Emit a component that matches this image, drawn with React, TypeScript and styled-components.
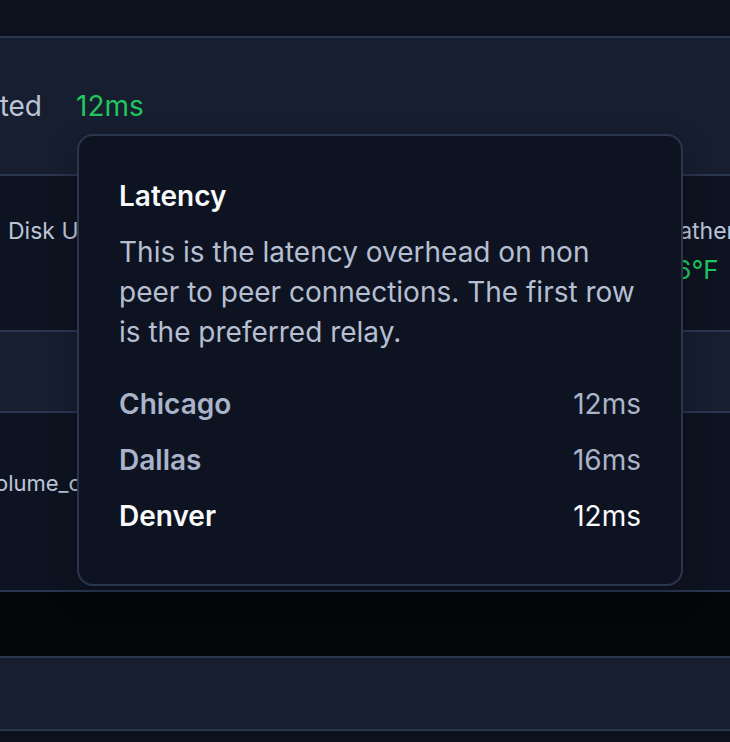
import styled, { createGlobalStyle } from "styled-components";
import { Sun } from "lucide-react";

const GlobalStyle = createGlobalStyle`
  body {
    margin: 0;
    background-color: #0c111d;
    font-family: Inter, "Noto Sans", sans-serif;
    overflow: hidden;
  }
`;

const Page = styled.div`
  position: relative;
  width: 730px;
  height: 742px;
  display: flex;
  flex-direction: column;
  background-color: #0c111d;
`;

const TopBand = styled.div`
  height: 36px;
  flex-shrink: 0;
`;

const Table = styled.div`
  border-top: 2px solid #2a3550;
  flex-shrink: 0;
`;

const Row = styled.div<{ $light?: boolean; $height: number; $padTop?: number }>`
  height: ${(p) => p.$height}px;
  padding-top: ${(p) => p.$padTop ?? 0}px;
  box-sizing: border-box;
  background-color: ${(p) => (p.$light ? "#161e30" : "#0e1321")};
  border-bottom: 2px solid #2a3550;
  overflow: hidden;
`;

const StatusRow = styled.div`
  display: flex;
  align-items: center;
  gap: 34px;
  height: 100%;
  font-size: 28px;
  line-height: 40px;
`;

// label whose left part runs off the page: keep the right end visible
const ClipLabel = styled.div<{ $width: number }>`
  width: ${(p) => p.$width}px;
  display: flex;
  justify-content: flex-end;
  overflow: hidden;
  white-space: nowrap;
  color: #bcc5d8;
`;

const Green = styled.span`
  color: #22c55e;
`;

const MetricGrid = styled.div`
  display: grid;
  grid-template-columns: 636px 1fr;
  padding-left: 8px;
`;

const Metric = styled.div`
  display: flex;
  flex-direction: column;
  gap: 6px;
  white-space: nowrap;
`;

const MetricLabel = styled.div`
  font-size: 23px;
  line-height: 32px;
  color: #bcc5d8;
`;

const MetricValue = styled.div`
  display: flex;
  align-items: center;
  gap: 1px;
  font-size: 26px;
  line-height: 34px;
  color: #22c55e;
`;

const Mono = styled.div<{ $shift: number }>`
  margin-left: -${(p) => p.$shift}px;
  font-size: 22px;
  line-height: 32px;
  color: #bcc5d8;
  white-space: nowrap;
`;

const BlackBand = styled.div`
  height: 64px;
  flex-shrink: 0;
  background-color: #04060a;
`;

const Tooltip = styled.div`
  position: absolute;
  left: 77px;
  top: 134px;
  width: 606px;
  box-sizing: border-box;
  padding: 40px;
  background-color: #0e1321;
  border: 2px solid #2a3550;
  border-radius: 16px;
  box-shadow: 0 10px 30px rgba(0, 0, 0, 0.25);
`;

const TipTitle = styled.div`
  font-size: 28px;
  line-height: 40px;
  font-weight: 600;
  color: #f8fafc;
  margin-bottom: 16px;
`;

const TipText = styled.p`
  margin: 0 0 24px;
  font-size: 28px;
  line-height: 40px;
  color: #b6bfd2;
`;

const RelayList = styled.div`
  display: flex;
  flex-direction: column;
`;

const Relay = styled.div<{ $active?: boolean }>`
  display: flex;
  justify-content: space-between;
  padding: 8px 0;
  font-size: 28px;
  line-height: 40px;
  color: ${(p) => (p.$active ? "#f8fafc" : "#a9b4cb")};
`;

const RelayName = styled.span`
  font-weight: 600;
`;

const relays = [
  { city: "Chicago", ms: 12 },
  { city: "Dallas", ms: 16 },
  { city: "Denver", ms: 12, active: true },
];

export default function App() {
  return (
    <Page>
      <GlobalStyle />
      <TopBand />
      <Table>
        <Row $light $height={138}>
          <StatusRow>
            <ClipLabel $width={42}>Connected</ClipLabel>
            <Green>12ms</Green>
          </StatusRow>
        </Row>
        <Row $height={156} $padTop={39}>
          <MetricGrid>
            <Metric>
              <MetricLabel>Disk Usage</MetricLabel>
            </Metric>
            <Metric>
              <MetricLabel>Weather</MetricLabel>
              <MetricValue>
                <Sun size={16} />
                76°F
              </MetricValue>
            </Metric>
          </MetricGrid>
        </Row>
        <Row $light $height={81} />
        <Row $height={179} $padTop={54}>
          <Mono $shift={17}>volume_cache</Mono>
        </Row>
      </Table>
      <BlackBand />
      <Table>
        <Row $light $height={73} />
      </Table>

      <Tooltip>
        <TipTitle>Latency</TipTitle>
        <TipText>
          This is the latency overhead on non peer to peer connections. The
          first row is the preferred relay.
        </TipText>
        <RelayList>
          {relays.map((r) => (
            <Relay key={r.city} $active={r.active}>
              <RelayName>{r.city}</RelayName>
              <span>{r.ms}ms</span>
            </Relay>
          ))}
        </RelayList>
      </Tooltip>
    </Page>
  );
}
